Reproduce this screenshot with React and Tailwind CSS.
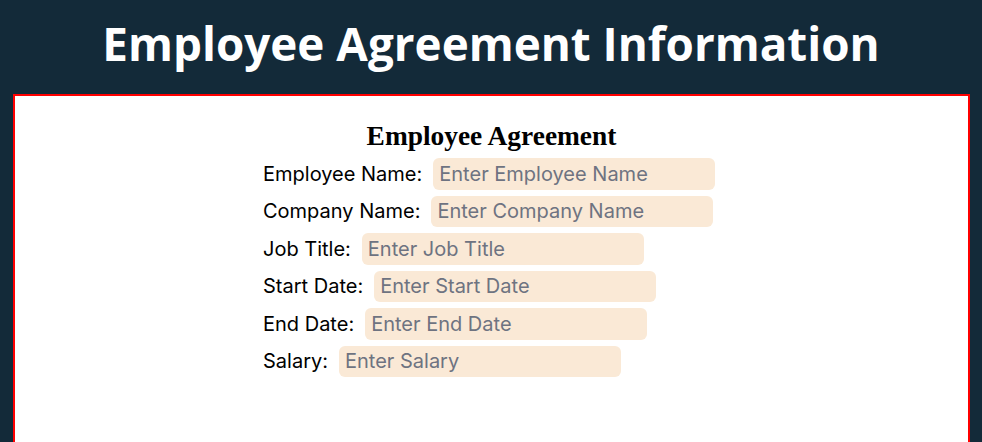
const fields = [
  { label: 'Employee Name:', placeholder: 'Enter Employee Name' },
  { label: 'Company Name:', placeholder: 'Enter Company Name' },
  { label: 'Job Title:', placeholder: 'Enter Job Title' },
  { label: 'Start Date:', placeholder: 'Enter Start Date' },
  { label: 'End Date:', placeholder: 'Enter End Date' },
  { label: 'Salary:', placeholder: 'Enter Salary' },
]

export default function App() {
  return (
    <div className="min-h-screen bg-[#132a39] pb-4">
      <h1 className="h-[94px] pb-[8px] flex items-center justify-center text-white font-bold text-[45.8px] font-['Open_Sans',sans-serif]">
        Employee Agreement Information
      </h1>

      <div className="ml-[13px] mr-[12px] bg-white border-2 border-[#ff0000] min-h-[400px] pt-[24px]">
        <h2 className="text-center text-black font-bold text-[27.4px] leading-[32px] font-['Liberation_Serif',serif]">
          Employee Agreement
        </h2>
        <form className="mx-auto w-[457px] flex flex-col gap-[6px] mt-[6px] font-['Inter',sans-serif]">
          {fields.map((f) => (
            <div key={f.label} className="flex items-center">
              <label className="text-[20px] text-black mr-[11px]">{f.label}</label>
              <input
                type="text"
                placeholder={f.placeholder}
                className="w-[282px] h-[31.5px] bg-[#fae9d6] rounded-[6px] px-[6px] text-[20px] placeholder:text-[#6e7381] outline-none"
              />
            </div>
          ))}
        </form>
      </div>
    </div>
  )
}
